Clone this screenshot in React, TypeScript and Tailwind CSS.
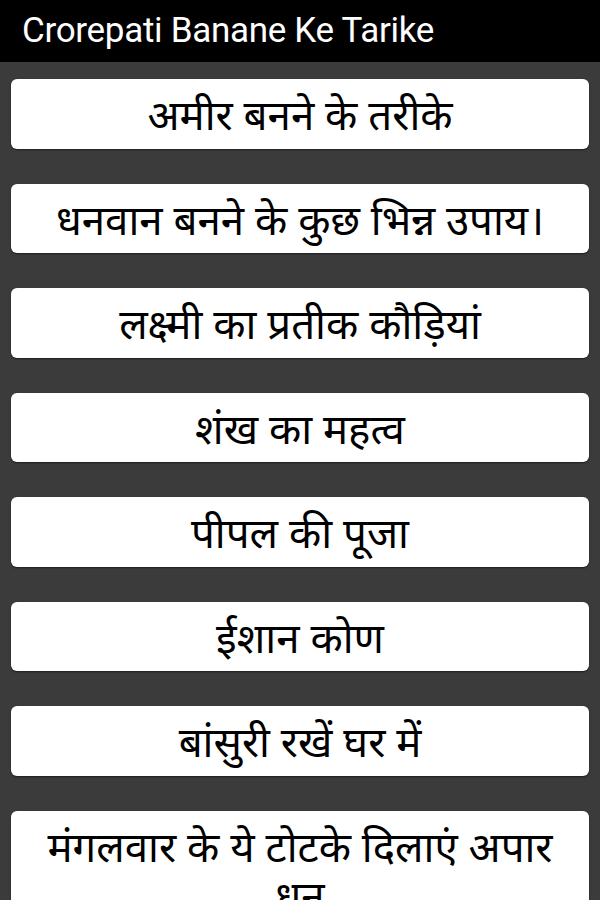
import React from 'react'

const TARIKE = [
  'अमीर बनने के तरीके',
  'धनवान बनने के कुछ भिन्न उपाय।',
  'लक्ष्मी का प्रतीक कौड़ियां',
  'शंख का महत्व',
  'पीपल की पूजा',
  'ईशान कोण',
  'बांसुरी रखें घर में',
  'मंगलवार के ये टोटके दिलाएं अपार धन',
]

export default function App() {
  return (
    <div className="min-h-screen bg-[#3b3b3b] font-['Noto_Sans','Noto_Sans_Devanagari',sans-serif]">
      {/* Header */}
      <div className="h-[62px] bg-black flex items-center px-[22px]">
        <h1 className="text-white text-[35px] font-['Roboto',sans-serif] tracking-[-0.3px]">
          Crorepati Banane Ke Tarike
        </h1>
      </div>

      {/* List */}
      <div className="flex flex-col gap-[35px] px-[11px] pt-[17px] pb-6">
        {TARIKE.map(t => (
          <button
            key={t}
            className="bg-white rounded-[6px] shadow-[0_1px_2px_rgba(0,0,0,0.5)] py-[10px] px-4 text-center text-black text-[42px] leading-[49.5px]"
          >
            {t}
          </button>
        ))}
      </div>
    </div>
  )
}
